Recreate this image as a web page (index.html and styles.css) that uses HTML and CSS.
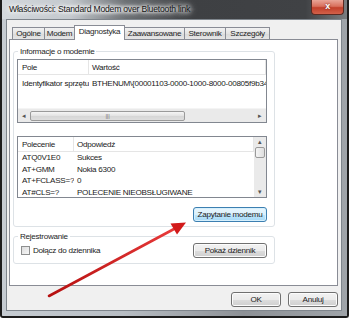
FILE: index.html
```html
<!DOCTYPE html>
<html lang="pl">

<head>
    <meta charset="UTF-8" />
    <title>Właściwości: Standard Modem over Bluetooth link</title>
    <link rel="stylesheet" href="styles.css">
</head>

<body>

    <div class="window">
        <!-- pasek tytułu -->
        <div class="titlebar">
            <span class="title">Właściwości: Standard Modem over Bluetooth link</span>
            <div class="close">x</div>
        </div>

        <div class="client">
            <div class="tabs">
                <div class="tab t1">Ogólne</div>
                <div class="tab t2">Modem</div>
                <div class="tab active">Diagnostyka</div>
                <div class="tab t4">Zaawansowane</div>
                <div class="tab t5">Sterownik</div>
                <div class="tab t6">Szczegóły</div>
            </div>

            <div class="panel">
                <fieldset class="group group-info">
                    <legend>Informacje o modemie</legend>

                    <div class="listview lv-info">
                        <div class="lv-header">
                            <div class="col c-pole">Pole</div>
                            <div class="col c-wart">Wartość</div>
                        </div>
                        <div class="lv-row">
                            <div class="col c-pole">Identyfikator sprzętu</div>
                            <div class="col c-wart">BTHENUM\{00001103-0000-1000-8000-00805f9b34</div>
                        </div>
                        <div class="hscroll">
                            <span class="arr">&#9666;</span>
                            <div class="hthumb">|||</div>
                            <span class="arr right">&#9656;</span>
                        </div>
                    </div>

                    <div class="listview lv-cmd">
                        <div class="lv-body">
                            <div class="lv-header">
                                <div class="col c-cmd">Polecenie</div>
                                <div class="col c-odp">Odpowiedź</div>
                            </div>
                            <div class="lv-row">
                                <div class="col c-cmd">ATQ0V1E0</div>
                                <div class="col c-odp">Sukces</div>
                            </div>
                            <div class="lv-row">
                                <div class="col c-cmd">AT+GMM</div>
                                <div class="col c-odp">Nokia 6300</div>
                            </div>
                            <div class="lv-row">
                                <div class="col c-cmd">AT+FCLASS=?</div>
                                <div class="col c-odp">0</div>
                            </div>
                            <div class="lv-row">
                                <div class="col c-cmd">AT#CLS=?</div>
                                <div class="col c-odp">POLECENIE NIEOBSŁUGIWANE</div>
                            </div>
                        </div>
                        <div class="vscroll">
                            <span class="varr">&#9652;</span>
                            <div class="vthumb"></div>
                            <span class="varr down">&#9662;</span>
                        </div>
                    </div>

                    <div class="btn-row">
                        <button class="btn btn-focus">Zapytanie modemu</button>
                    </div>
                </fieldset>

                <fieldset class="group group-log">
                    <legend>Rejestrowanie</legend>
                    <div class="log-row">
                        <label class="check"><span class="box"></span>Dołącz do dziennika</label>
                        <button class="btn btn-log">Pokaż dziennik</button>
                    </div>
                </fieldset>
            </div>

            <div class="footer">
                <button class="btn btn-ok">OK</button>
                <button class="btn btn-cancel">Anuluj</button>
            </div>
        </div>

        <!-- czerwona strzałka -->
        <svg class="arrow" width="349" height="318">
            <defs>
                <linearGradient id="red" x1="0" y1="0" x2="0" y2="1">
                    <stop offset="0" stop-color="#e83a3a" />
                    <stop offset="1" stop-color="#b51010" />
                </linearGradient>
            </defs>
            <line x1="47" y1="296" x2="172" y2="229" stroke="url(#red)" stroke-width="2.6" stroke-linecap="round" />
            <path d="M184,222.5 L168.5,223.5 L175,234.5 Z" fill="#d21a1a" />
        </svg>
    </div>

</body>

</html>
```

FILE: styles.css
```css
body {
    margin: 0;
    background: #fff;
    font-family: "Liberation Sans", Arial, sans-serif;
    font-size: 8.1px;
    letter-spacing: -0.28px;
    color: #1a1a1a;
}

.window {
    position: relative;
    width: 349px;
    height: 318px;
    box-sizing: border-box;
    border: 2px solid #1c1c1c;
    border-top: none;
    border-radius: 0 0 3px 3px;
    padding: 0 5px 4px 4px;
    background: linear-gradient(90deg, #c6ccd2 0%, #b7bdc3 35%, #8d9196 70%, #9fa4a9 100%);
    overflow: hidden;
}

.titlebar {
    position: relative;
    height: 19px;
    margin: 0 -5px 0 -4px;
    padding-left: 7px;
    background: linear-gradient(90deg, #d3d8dd 0%, #c3c8cd 20%, #6a6e72 36%, #3e4043 55%, #404245 88%, #7a7d80 100%);
    display: flex;
    align-items: center;
}

.title {
    font-size: 8.6px;
    letter-spacing: -0.2px;
    color: #141414;
    text-shadow: 0 0 4px #fff, 0 0 6px #fff, 0 0 8px rgba(255, 255, 255, 0.8);
    padding: 0 6px 1px 0;
    background: radial-gradient(ellipse at center, rgba(255, 255, 255, 0.6), rgba(255, 255, 255, 0) 72%);
}

.close {
    position: absolute;
    right: 3px;
    top: 0;
    width: 33px;
    height: 15px;
    box-sizing: border-box;
    border: 1px solid #5b2a22;
    border-top: none;
    border-radius: 0 0 4px 4px;
    background: linear-gradient(#e9a597 0%, #d9705d 45%, #c2402b 55%, #d2614a 100%);
    color: #fff;
    font-weight: bold;
    font-size: 9px;
    text-align: center;
    line-height: 13px;
    text-shadow: 0 0 2px #6a1a10;
}

.client {
    height: 292px;
    box-sizing: border-box;
    border: 1px solid #7e858c;
    background: #f0f0f0;
    padding: 5px 3px 3px 2px;
    display: flex;
    flex-direction: column;
}

.tabs {
    display: flex;
    align-items: flex-end;
    height: 14px;
    padding-left: 3px;
    position: relative;
    z-index: 1;
}

.tab {
    height: 12px;
    box-sizing: border-box;
    border: 1px solid #898c95;
    border-bottom: none;
    border-right: none;
    background: linear-gradient(#f2f2f2, #e3e3e3 50%, #d9d9d9 51%, #e6e6e6);
    line-height: 11px;
    text-align: center;
    white-space: nowrap;
    color: #1e1e1e;
}

.t1 { width: 32px; }
.t2 { width: 30px; }
.t4 { width: 59px; border-left: none; }
.t5 { width: 41px; }
.t6 { width: 45px; border-right: 1px solid #898c95; }

.tab.active {
    width: 51px;
    height: 15px;
    margin-bottom: -1px;
    background: #fff;
    border-right: 1px solid #898c95;
    line-height: 12px;
}

.panel {
    height: 247px;
    box-sizing: border-box;
    border: 1px solid #898c95;
    background: #fff;
    padding: 7px 0 0 3px;
}

.group {
    width: 262px;
    box-sizing: border-box;
    margin: 0;
    border: 1px solid #dde2e6;
    border-radius: 3px;
    padding: 0 7px 0 3px;
}

.group legend {
    padding: 0 2px;
    margin-left: 1px;
    color: #1e1e1e;
}

.group-info {
    height: 180px;
    padding-top: 3px;
}

.group-log {
    margin-top: 5px;
    height: 32px;
}

.listview {
    border: 1px solid #828790;
    background: #fff;
    box-sizing: border-box;
    width: 250px;
}

.lv-info {
    height: 64px;
    display: flex;
    flex-direction: column;
}

.lv-header {
    display: flex;
    height: 14px;
    border-bottom: 1px solid #e5e5e5;
    line-height: 15px;
}

.lv-header .col {
    border-right: 1px solid #e5e5e5;
}

.lv-row {
    display: flex;
    height: 11.7px;
    line-height: 11.7px;
}

.lv-info .lv-row {
    margin-top: 3px;
}

.col {
    box-sizing: border-box;
    padding-left: 4px;
    white-space: nowrap;
    overflow: hidden;
}

.c-pole { width: 71px; }
.c-wart { flex: 1; padding-left: 3px; }
.c-cmd { width: 56px; }
.c-odp { flex: 1; padding-left: 3px; }

.hscroll {
    margin-top: auto;
    height: 13px;
    display: flex;
    align-items: center;
    background: #eaeaea;
    border-top: 1px solid #f4f4f4;
}

.arr {
    width: 12px;
    font-size: 7px;
    color: #555;
    text-align: center;
}

.arr.right {
    margin-left: auto;
}

.hthumb {
    width: 155px;
    height: 10px;
    box-sizing: border-box;
    border: 1px solid #9a9a9a;
    border-radius: 2px;
    background: linear-gradient(#f5f5f5, #e2e2e2 50%, #d6d6d6 51%, #dedede);
    font-size: 6px;
    line-height: 8px;
    text-align: center;
    color: #777;
}

.lv-cmd {
    margin-top: 13px;
    height: 62px;
    display: flex;
    overflow: hidden;
}

.lv-body {
    flex: 1;
}

.vscroll {
    width: 12px;
    background: #eaeaea;
    display: flex;
    flex-direction: column;
    align-items: center;
}

.varr {
    font-size: 7px;
    height: 10px;
    line-height: 10px;
    color: #555;
}

.varr.down {
    margin-top: auto;
}

.vthumb {
    width: 10px;
    height: 11px;
    box-sizing: border-box;
    border: 1px solid #9a9a9a;
    border-radius: 2px;
    background: linear-gradient(90deg, #f5f5f5, #dedede);
}

.btn {
    font-family: inherit;
    font-size: 8.1px;
    letter-spacing: -0.28px;
    white-space: nowrap;
    color: #1a1a1a;
    height: 15px;
    box-sizing: border-box;
    border: 1px solid #707070;
    border-radius: 3px;
    padding: 0;
    background: linear-gradient(#f2f2f2, #ebebeb 50%, #dddddd 51%, #cfcfcf);
    box-shadow: inset 0 0 0 1px #fcfcfc;
}

.btn-row {
    display: flex;
    justify-content: flex-end;
    margin-top: 9px;
}

.btn-focus {
    width: 74px;
    border-color: #3c7fb1;
    background: linear-gradient(#eaf6fd, #d9f0fc 50%, #bee6fd 51%, #a7d9f5);
    box-shadow: inset 0 0 0 1px #d6f0fd;
}

.log-row {
    display: flex;
    align-items: center;
    justify-content: space-between;
    margin-top: 2px;
}

.check {
    display: flex;
    align-items: center;
    margin-left: 4px;
}

.box {
    width: 9px;
    height: 9px;
    box-sizing: border-box;
    border: 1px solid #8e8f8f;
    background: linear-gradient(135deg, #dcdcdc, #f7f7f7);
    margin-right: 3px;
}

.btn-log {
    width: 74px;
}

.footer {
    margin-top: auto;
    display: flex;
    justify-content: flex-end;
    gap: 7px;
}

.btn-ok {
    width: 50px;
}

.btn-cancel {
    width: 50px;
}

.arrow {
    position: absolute;
    top: 0;
    left: 0;
    pointer-events: none;
}
```
